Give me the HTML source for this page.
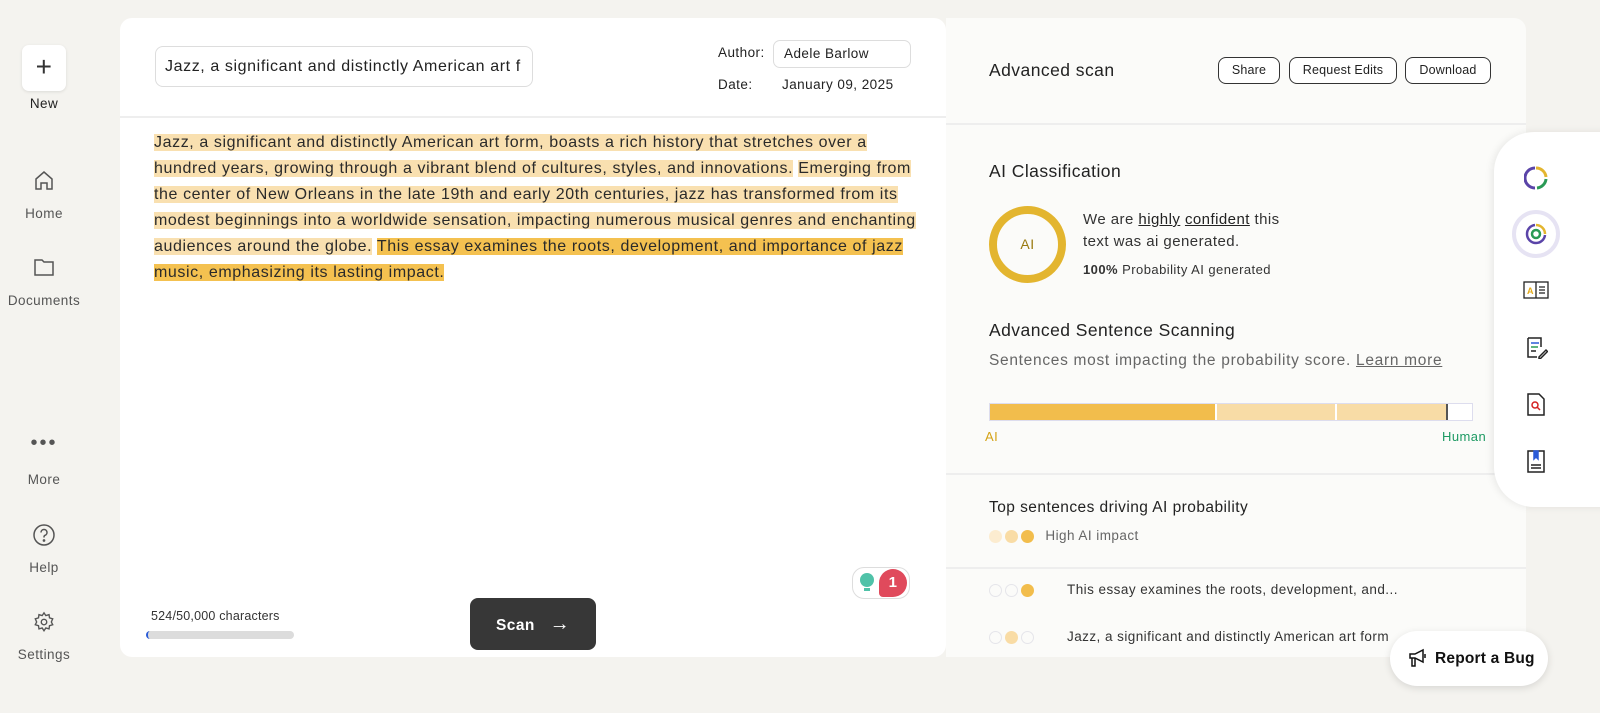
<!DOCTYPE html>
<html><head><style>
*{box-sizing:border-box;margin:0;padding:0}
body{width:1600px;height:713px;overflow:hidden;background:#f4f3ef;font-family:"Liberation Sans",sans-serif;color:#222;position:relative;letter-spacing:0.45px}
.abs{position:absolute}
.navi{position:absolute;left:0;width:88px;text-align:center;font-size:13.5px;color:#555}
.card{left:120px;top:18px;width:826px;height:639px;background:#fff;border-radius:12px}
.rp{left:946px;top:18px;width:580px;height:639px;background:#fbfbf9;border-radius:0 12px 12px 0}
.txt{left:154px;top:130px;font-size:16px;letter-spacing:0.6px;line-height:26px;color:#2a2a2a;white-space:nowrap}
.l{background:#f9e0b0}.d{background:#f4c150}
.btn{position:absolute;top:57px;height:27px;border:1px solid #333;border-radius:8px;font-size:12.5px;line-height:25px;text-align:center;color:#222;background:#fff;letter-spacing:0.2px}
.dot{display:inline-block;width:13px;height:13px;border-radius:50%;margin-right:3px;vertical-align:middle}
</style></head><body>
<div class="abs" style="left:22px;top:45px;width:44px;height:46px;background:#fff;border-radius:7px;box-shadow:0 1px 3px rgba(0,0,0,.1);font-size:28px;line-height:44px;text-align:center;color:#333;font-weight:300">+</div>
<div class="navi" style="top:96px;color:#222">New</div>
<svg class="abs" style="left:33px;top:169px" width="22" height="22" viewBox="0 0 22 22" fill="none" stroke="#555" stroke-width="1.5"><path d="M3 10L11 3l8 7v10h-5v-6h-6v6H3z"/></svg>
<div class="navi" style="top:206px">Home</div>
<svg class="abs" style="left:33px;top:257px" width="22" height="20" viewBox="0 0 22 20" fill="none" stroke="#555" stroke-width="1.5"><path d="M2 3h7l2 2h9v13H2z"/></svg>
<div class="navi" style="top:293px">Documents</div>
<div class="navi" style="top:432px;font-size:20px;letter-spacing:2px;color:#555">•••</div>
<div class="navi" style="top:472px">More</div>
<svg class="abs" style="left:32px;top:523px" width="24" height="24" viewBox="0 0 24 24" fill="none" stroke="#555" stroke-width="1.5"><circle cx="12" cy="12" r="10"/><path d="M9 9.5a3 3 0 1 1 4 2.8c-.7.3-1 1-1 1.7v.5"/><circle cx="12" cy="17.5" r=".6" fill="#555"/></svg>
<div class="navi" style="top:560px">Help</div>
<svg class="abs" style="left:33px;top:611px" width="22" height="22" viewBox="0 0 24 24" fill="none" stroke="#555" stroke-width="1.5"><circle cx="12" cy="12" r="3"/><path d="M12 2l2 3 3.5-1 .5 3.5 3.5 1-1.5 3.5 1.5 3-3.5 1-.5 3.5-3.5-1-2 3-2-3-3.5 1-.5-3.5-3.5-1 1.5-3-1.5-3.5 3.5-1L6.5 4 10 5z"/></svg>
<div class="navi" style="top:647px">Settings</div>

<div class="abs card"></div>
<div class="abs" style="left:155px;top:46px;width:378px;height:41px;border:1px solid #ddd;border-radius:8px;font-size:16px;letter-spacing:0.6px;line-height:39px;padding-left:9px;overflow:hidden;white-space:nowrap;color:#222">Jazz, a significant and distinctly American art f</div>
<div class="abs" style="left:718px;top:45px;font-size:13.5px">Author:</div>
<div class="abs" style="left:773px;top:40px;width:138px;height:28px;border:1px solid #ddd;border-radius:7px;font-size:13.5px;line-height:26px;padding-left:10px">Adele Barlow</div>
<div class="abs" style="left:718px;top:77px;font-size:13.5px">Date:</div>
<div class="abs" style="left:782px;top:77px;font-size:13.5px">January 09, 2025</div>
<div class="abs" style="left:120px;top:116px;width:826px;height:2px;background:#eee"></div>
<div class="abs txt">
<span class="l">Jazz, a significant and distinctly American art form, boasts a rich history that stretches over a</span><br>
<span class="l">hundred years, growing through a vibrant blend of cultures, styles, and innovations.</span> <span class="l">Emerging from</span><br>
<span class="l">the center of New Orleans in the late 19th and early 20th centuries, jazz has transformed from its</span><br>
<span class="l">modest beginnings into a worldwide sensation, impacting numerous musical genres and enchanting</span><br>
<span class="l">audiences around the globe.</span> <span class="d">This essay examines the roots, development, and importance of jazz</span><br>
<span class="d">music, emphasizing its lasting impact.</span>
</div>
<div class="abs" style="left:852px;top:567px;width:58px;height:32px;border:1px solid #ddd;border-radius:12px;background:#fff"></div>
<div class="abs" style="left:860px;top:573px;width:14px;height:14px;border-radius:50%;background:#4fc2a8"></div>
<div class="abs" style="left:864px;top:588px;width:6px;height:3px;background:#4fc2a8"></div>
<div class="abs" style="left:879px;top:569px;width:28px;height:28px;border-radius:14px 14px 14px 4px;background:#e04a5c;color:#fff;font-weight:bold;font-size:15px;line-height:28px;text-align:center">1</div>
<div class="abs" style="left:151px;top:609px;font-size:12.5px;color:#333;letter-spacing:0.2px">524/50,000 characters</div>
<div class="abs" style="left:146px;top:631px;width:148px;height:8px;border-radius:4px;background:#dcdcdc;border-left:2px solid #2a5bd7"></div>
<div class="abs" style="left:470px;top:598px;width:126px;height:52px;border-radius:8px;background:#373737;color:#fff;font-size:15.5px;font-weight:bold;line-height:52px;padding-left:26px">Scan <span style="font-weight:normal;font-size:20px;margin-left:10px">→</span></div>

<div class="abs rp"></div>
<div class="abs" style="left:989px;top:60px;font-size:17.5px;color:#222">Advanced scan</div>
<div class="btn" style="left:1218px;width:62px">Share</div>
<div class="btn" style="left:1289px;width:108px">Request Edits</div>
<div class="btn" style="left:1405px;width:86px">Download</div>
<div class="abs" style="left:946px;top:123px;width:580px;height:2px;background:#eee"></div>
<div class="abs" style="left:989px;top:161px;font-size:17.5px">AI Classification</div>
<div class="abs" style="left:989px;top:206px;width:77px;height:77px;border-radius:50%;border:8px solid #e3b52f;text-align:center;line-height:61px;font-size:14px;color:#9a7a10">AI</div>
<div class="abs" style="left:1083px;top:209px;font-size:15px;line-height:22px;color:#333">We are <u style="color:#222">highly</u> <u style="color:#222">confident</u> this<br>text was ai generated.</div>
<div class="abs" style="left:1083px;top:262px;font-size:13px;color:#333"><b>100%</b> Probability AI generated</div>
<div class="abs" style="left:989px;top:320px;font-size:17.5px">Advanced Sentence Scanning</div>
<div class="abs" style="left:989px;top:352px;font-size:15.5px;color:#666;letter-spacing:0.7px">Sentences most impacting the probability score. <u>Learn more</u></div>
<div class="abs" style="left:989px;top:403px;width:484px;height:18px;border:1px solid #dde;background:#fff;display:flex">
<div style="width:227px;background:#f2bd4c;border-right:2px solid #fff"></div>
<div style="width:120px;background:#f8dca6;border-right:2px solid #fff"></div>
<div style="width:111px;background:#f8dca6;border-right:2px solid #555"></div></div>
<div class="abs" style="left:985px;top:429px;font-size:13px;color:#d4a317">AI</div>
<div class="abs" style="left:1442px;top:429px;font-size:13px;color:#1e9a63">Human</div>
<div class="abs" style="left:946px;top:473px;width:580px;height:2px;background:#eee"></div>
<div class="abs" style="left:989px;top:499px;font-size:15.5px">Top sentences driving AI probability</div>
<div class="abs" style="left:989px;top:528px;font-size:13.5px;color:#666"><span class="dot" style="background:#fcecd0"></span><span class="dot" style="background:#f9dca5"></span><span class="dot" style="background:#f2bd4c"></span> &nbsp;High AI impact</div>
<div class="abs" style="left:946px;top:567px;width:580px;height:2px;background:#eee"></div>
<div class="abs" style="left:989px;top:582px;font-size:13.5px;color:#333"><span class="dot" style="border:1px solid #e5e5ea"></span><span class="dot" style="border:1px solid #e5e5ea"></span><span class="dot" style="background:#f2bd4c"></span><span style="margin-left:30px">This essay examines the roots, development, and...</span></div>
<div class="abs" style="left:989px;top:629px;font-size:13.5px;color:#333;white-space:nowrap"><span class="dot" style="border:1px solid #e5e5ea"></span><span class="dot" style="background:#f9dca5"></span><span class="dot" style="border:1px solid #e5e5ea"></span><span style="margin-left:30px">Jazz, a significant and distinctly American art form</span></div>

<div class="abs" style="left:1494px;top:132px;width:120px;height:375px;background:#fff;border-radius:40px 0 0 40px;box-shadow:-2px 0 8px rgba(0,0,0,.08)"></div>
<svg class="abs" style="left:1524px;top:166px" width="24" height="24" viewBox="0 0 24 24" fill="none" stroke-width="3"><path d="M12 2A10 10 0 0 1 22 11" stroke="#e3b52f"/><path d="M22 13A10 10 0 0 1 13 22" stroke="#2a9a55"/><path d="M11 22A10 10 0 0 1 11 2" stroke="#5a44a8"/></svg>
<div class="abs" style="left:1512px;top:210px;width:48px;height:48px;border-radius:50%;border:4px solid #e6e3f3;background:#fff"></div>
<svg class="abs" style="left:1524px;top:222px" width="24" height="24" viewBox="0 0 24 24" fill="none" stroke-width="2.5"><path d="M12 3a9 9 0 0 1 9 9" stroke="#e3b52f"/><path d="M21 13a9 9 0 0 1-9 8A9 9 0 0 1 3 12a9 9 0 0 1 8-9" stroke="#5a44a8"/><circle cx="12" cy="12" r="4" stroke="#2a9a55"/></svg>
<svg class="abs" style="left:1523px;top:281px" width="26" height="18" viewBox="0 0 26 18" fill="none" stroke="#222" stroke-width="1.3"><rect x="1" y="1" width="24" height="16"/><path d="M13 1v16M16 6h6M16 9h6M16 12h6"/><text x="4" y="13" font-size="9" fill="#e3a917" stroke="none" font-family="Liberation Sans" font-weight="bold">A</text></svg>
<svg class="abs" style="left:1526px;top:337px" width="22" height="22" viewBox="0 0 22 22" fill="none" stroke-width="1.5"><path d="M2 1h13v9M2 1v19h9" stroke="#222"/><path d="M5 6h8" stroke="#2a5bd7"/><path d="M5 10h7" stroke="#2a9a55"/><path d="M5 14h5" stroke="#222"/><path d="M13 20l7-7 1.5 1.5-7 7H13z" stroke="#222"/></svg>
<svg class="abs" style="left:1527px;top:393px" width="18" height="23" viewBox="0 0 18 23" fill="none" stroke-width="1.5"><path d="M1 1h11l5 5v16H1z" stroke="#222"/><circle cx="8" cy="12" r="3" stroke="#d42020"/><path d="M10 14l3 3" stroke="#d42020"/></svg>
<svg class="abs" style="left:1527px;top:450px" width="18" height="23" viewBox="0 0 18 23" fill="none" stroke-width="1.5"><path d="M1 1h16v21H1z" stroke="#222"/><path d="M7 1v8l2-2 2 2V1z" fill="#2a5bd7" stroke="#2a5bd7"/><path d="M4 15h10M4 18h10" stroke="#222"/></svg>

<div class="abs" style="left:1390px;top:631px;width:158px;height:55px;background:#fff;border-radius:28px;box-shadow:0 2px 8px rgba(0,0,0,.12);font-size:15.5px;font-weight:bold;line-height:55px;padding-left:45px;color:#111;letter-spacing:0.2px">Report a Bug</div>
<svg class="abs" style="left:1408px;top:648px" width="20" height="20" viewBox="0 0 20 20" fill="none" stroke="#111" stroke-width="1.5"><path d="M2 6h5l8-4v12l-8-4H2zM4 10v8h3v-8"/><path d="M17 6v4"/></svg>
</body></html>
